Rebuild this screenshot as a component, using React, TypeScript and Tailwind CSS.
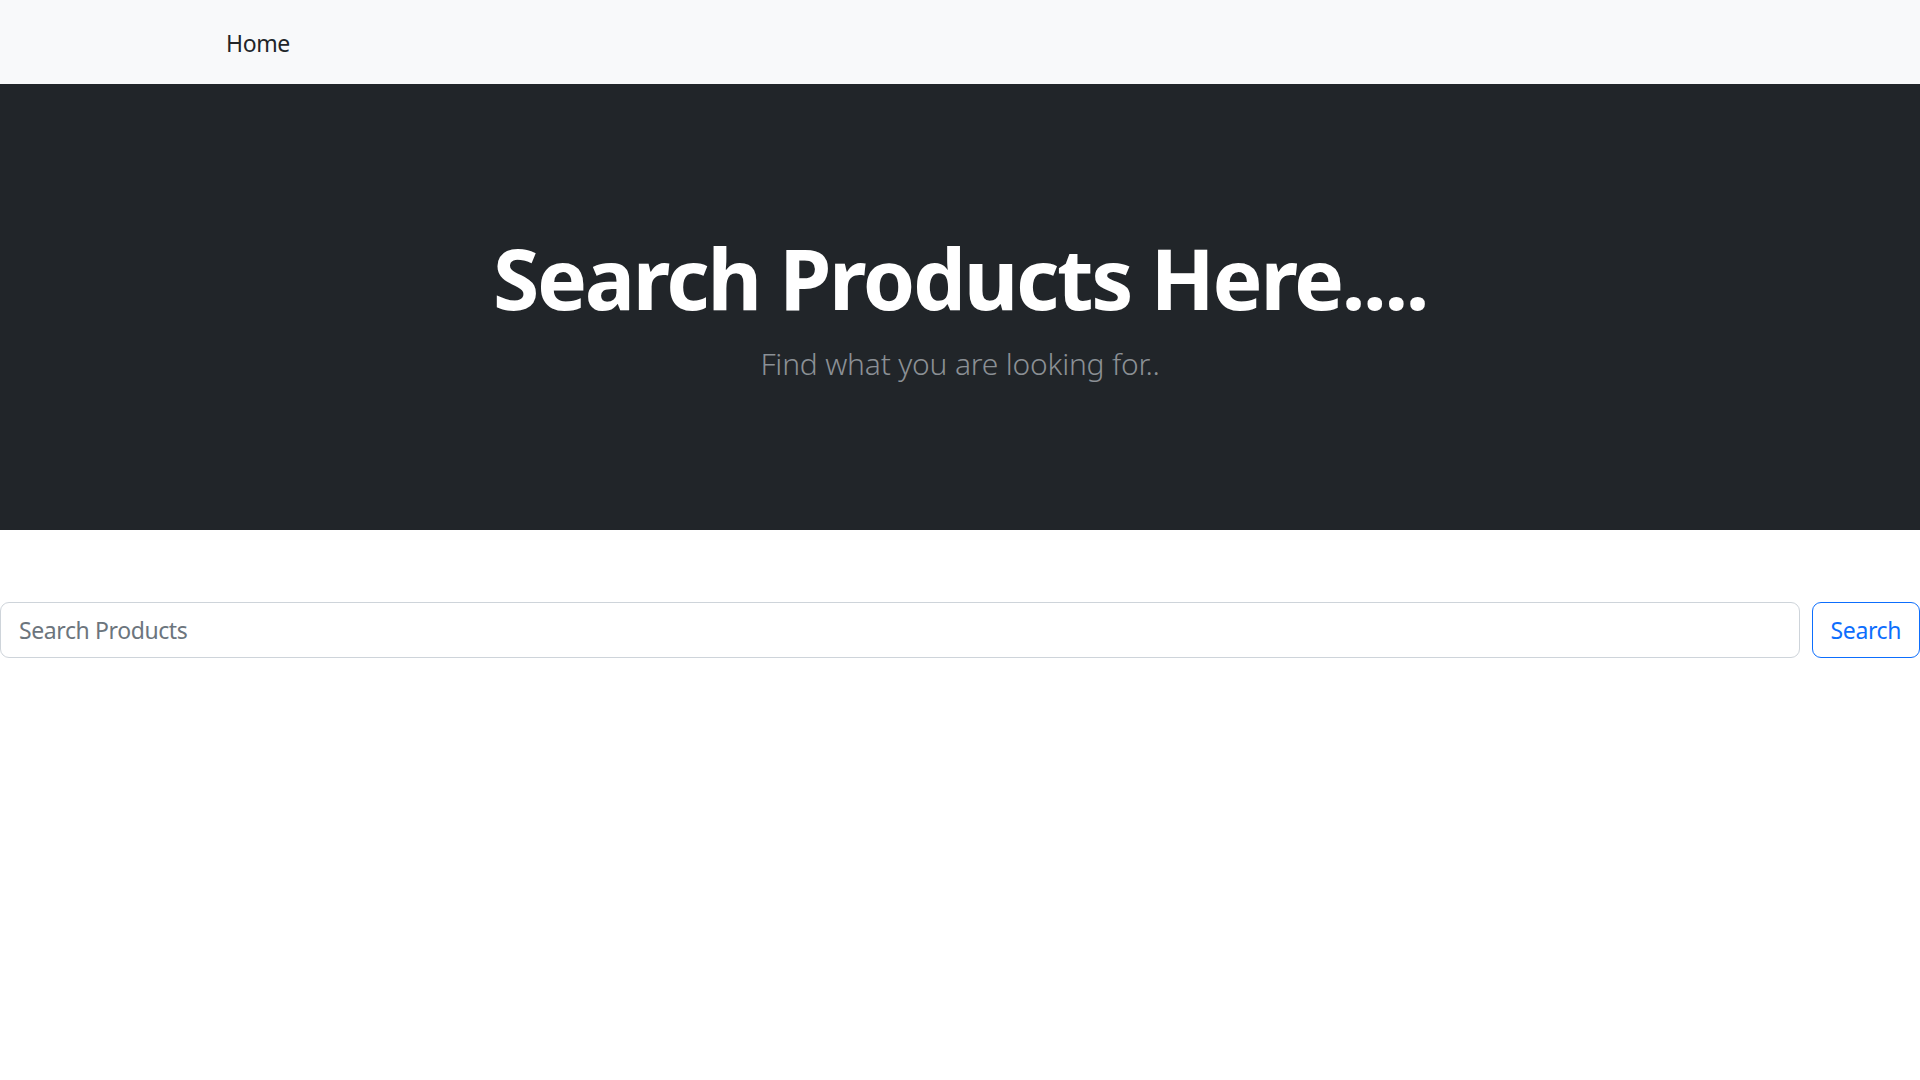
import React, { useState } from "react";

const font = { fontFamily: '"Noto Sans", "Open Sans", sans-serif' };

const App = () => {
  const [query, setQuery] = useState("");

  return (
    <div className="min-h-screen bg-white" style={font}>
      <nav className="h-[84px] bg-[#f8f9fa] flex items-center pl-[226px]">
        <a href="#" className="text-[23px] text-[#212529] leading-[36px] tracking-[-0.4px] pt-[2px]">
          Home
        </a>
      </nav>

      <header className="bg-[#212529] pt-[144px] pb-[144px] text-center">
        <h1 className="text-[84px] font-bold leading-[1.2] text-white tracking-[-2.3px] mb-[12px]">
          Search Products Here....
        </h1>
        <p className="text-[30px] font-light leading-[45px] text-[#8b9095] tracking-[-0.2px]">
          Find what you are looking for..
        </p>
      </header>

      <form
        className="mt-[72px] flex gap-[12px]"
        onSubmit={(e) => e.preventDefault()}
      >
        <input
          type="search"
          value={query}
          onChange={(e) => setQuery(e.target.value)}
          placeholder="Search Products"
          className="flex-1 h-[56px] px-[18px] text-[23px] tracking-[-0.4px] text-[#212529] placeholder:text-[#6c757d] border-[1.5px] border-[#ced4da] rounded-[9px] outline-none"
        />
        <button
          type="submit"
          className="h-[56px] px-[18px] text-[23px] tracking-[-0.4px] text-[#0d6efd] border-[1.5px] border-[#0d6efd] rounded-[9px] bg-white"
        >
          Search
        </button>
      </form>
    </div>
  );
};

export default App;
